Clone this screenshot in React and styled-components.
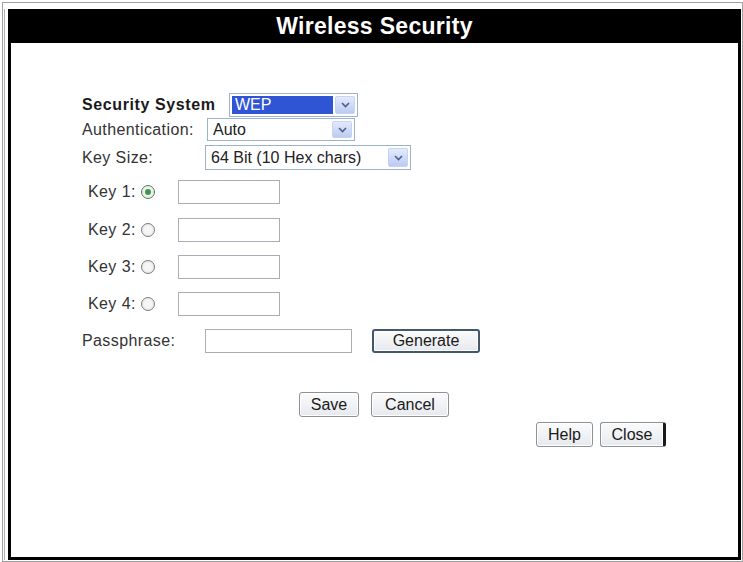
import React from "react";
import styled, { createGlobalStyle } from "styled-components";

const GlobalStyle = createGlobalStyle`
  html, body {
    margin: 0;
    padding: 0;
    background: #fff;
  }
  body {
    font-family: "Liberation Sans", Arial, sans-serif;
    color: #222;
  }
`;

const Page = styled.div`
  width: 743px;
  height: 562px;
  box-sizing: border-box;
  padding: 2px 0 0 2px;
`;

const Frame = styled.div`
  width: 741px;
  height: 560px;
  box-sizing: border-box;
  border: 1px solid #a0a0a0;
  padding: 6px 1px 1px 5px;
  display: flex;
`;

const Panel = styled.div`
  flex: 1;
  display: flex;
  flex-direction: column;
  border: 3px solid #000;
  border-top: 0;
  box-shadow: -3px 0 0 #fff, -4px 0 0 #b0b0b0;
`;

const Header = styled.div`
  height: 34px;
  margin: 0 -3px;
  background: #000;
  color: #fff;
  font-weight: bold;
  font-size: 23px;
  line-height: 34px;
  text-align: center;
  letter-spacing: 0.3px;
`;

const Body = styled.div`
  flex: 1;
  display: flex;
  flex-direction: column;
  padding: 0 72px 0 71px;
  background: #fff;
`;

const Row = styled.div`
  display: flex;
  align-items: center;
  height: ${(p) => p.h || 24}px;
  margin-top: ${(p) => p.mt || 0}px;
  padding-left: ${(p) => p.indent || 0}px;
  justify-content: ${(p) => p.justify || "flex-start"};
  gap: ${(p) => p.gap || 0}px;
`;

const Label = styled.span`
  width: ${(p) => (p.w ? `${p.w}px` : "auto")};
  flex-shrink: 0;
  font-size: 16px;
  font-weight: ${(p) => (p.bold ? "bold" : "normal")};
  letter-spacing: ${(p) => (p.bold ? "0.6px" : "0.4px")};
  color: ${(p) => (p.bold ? "#1a1a1a" : "#333")};
  white-space: nowrap;
`;

const SelectBox = styled.div`
  width: ${(p) => p.w}px;
  height: 100%;
  box-sizing: border-box;
  border: 1px solid #9fb2cc;
  background: #fff;
  display: flex;
  align-items: stretch;
  padding: 2px;
  gap: 2px;
`;

const SelectValue = styled.div`
  flex: 1;
  display: flex;
  align-items: center;
  padding-left: 3px;
  font-size: 16px;
  color: ${(p) => (p.selected ? "#fff" : "#222")};
  background: ${(p) => (p.selected ? "#2f55d4" : "transparent")};
  white-space: nowrap;
  overflow: hidden;
`;

const ArrowBtn = styled.div`
  width: 20px;
  flex-shrink: 0;
  box-sizing: border-box;
  border: 1px solid #c6d3f2;
  border-radius: 2px;
  background: linear-gradient(#e3eafc, #bccbf3);
  display: flex;
  align-items: center;
  justify-content: center;
`;

const Radio = styled.span`
  width: 14px;
  height: 14px;
  box-sizing: border-box;
  border-radius: 50%;
  border: 1px solid ${(p) => (p.checked ? "#4f7f55" : "#7d7d7d")};
  background: radial-gradient(circle, #f6f6f6 40%, #dcdcdc 100%);
  display: flex;
  align-items: center;
  justify-content: center;
  margin: 0 ${(p) => p.mr || 0}px 0 ${(p) => p.ml || 0}px;
  flex-shrink: 0;

  &::after {
    content: "";
    width: 6px;
    height: 6px;
    border-radius: 50%;
    background: #3c9a45;
    display: ${(p) => (p.checked ? "block" : "none")};
  }
`;

const TextBox = styled.div`
  width: ${(p) => p.w}px;
  height: 100%;
  box-sizing: border-box;
  border: 1px solid #a9aeb5;
  background: #fff;
  margin-right: ${(p) => p.mr || 0}px;
`;

const Button = styled.button`
  width: ${(p) => p.w}px;
  height: 100%;
  box-sizing: border-box;
  padding: 0;
  font-family: "Liberation Sans", Arial, sans-serif;
  font-size: 16px;
  color: #1a1a1a;
  background: linear-gradient(#fbfbfb, #e6e9ee);
  border: ${(p) => (p.strong ? "2px solid #44576d" : "1px solid #8d9198")};
  border-right: ${(p) =>
    p.edge ? "3px solid #1a1a1a" : p.strong ? "2px solid #44576d" : "1px solid #8d9198"};
  border-radius: 3px;
  box-shadow: inset 0 0 0 1px #fff;
`;

const Chevron = () => (
  <svg width="9" height="6" viewBox="0 0 9 6">
    <path d="M1 1 L4.5 4.5 L8 1" fill="none" stroke="#4b5f8a" strokeWidth="1.6" />
  </svg>
);

const Select = ({ w, value, selected }) => (
  <SelectBox w={w}>
    <SelectValue selected={selected}>{value}</SelectValue>
    <ArrowBtn>
      <Chevron />
    </ArrowBtn>
  </SelectBox>
);

const keys = [
  { n: 1, mt: 10, checked: true },
  { n: 2, mt: 14 },
  { n: 3, mt: 13 },
  { n: 4, mt: 13 },
];

export default function App() {
  return (
    <Page>
      <GlobalStyle />
      <Frame>
        <Panel>
          <Header>Wireless Security</Header>
          <Body>
            <Row mt={50} h={24}>
              <Label bold w={147}>Security System</Label>
              <Select w={129} value="WEP" selected />
            </Row>
            <Row mt={1} h={23}>
              <Label w={125}>Authentication:</Label>
              <Select w={148} value="Auto" />
            </Row>
            <Row mt={4} h={25}>
              <Label w={123}>Key Size:</Label>
              <Select w={206} value="64 Bit (10 Hex chars)" />
            </Row>
            {keys.map((k) => (
              <Row key={k.n} mt={k.mt} h={24} indent={6}>
                <Label>Key {k.n}:</Label>
                <Radio checked={k.checked} ml={5} mr={23} />
                <TextBox w={102} />
              </Row>
            ))}
            <Row mt={13} h={24}>
              <Label w={123}>Passphrase:</Label>
              <TextBox w={147} mr={20} />
              <Button strong w={108}>Generate</Button>
            </Row>
            <Row mt={39} h={25} gap={12} justify="center">
              <Button w={60}>Save</Button>
              <Button w={78}>Cancel</Button>
            </Row>
            <Row mt={5} h={25} gap={7} justify="flex-end">
              <Button w={57}>Help</Button>
              <Button edge w={66}>Close</Button>
            </Row>
          </Body>
        </Panel>
      </Frame>
    </Page>
  );
}
